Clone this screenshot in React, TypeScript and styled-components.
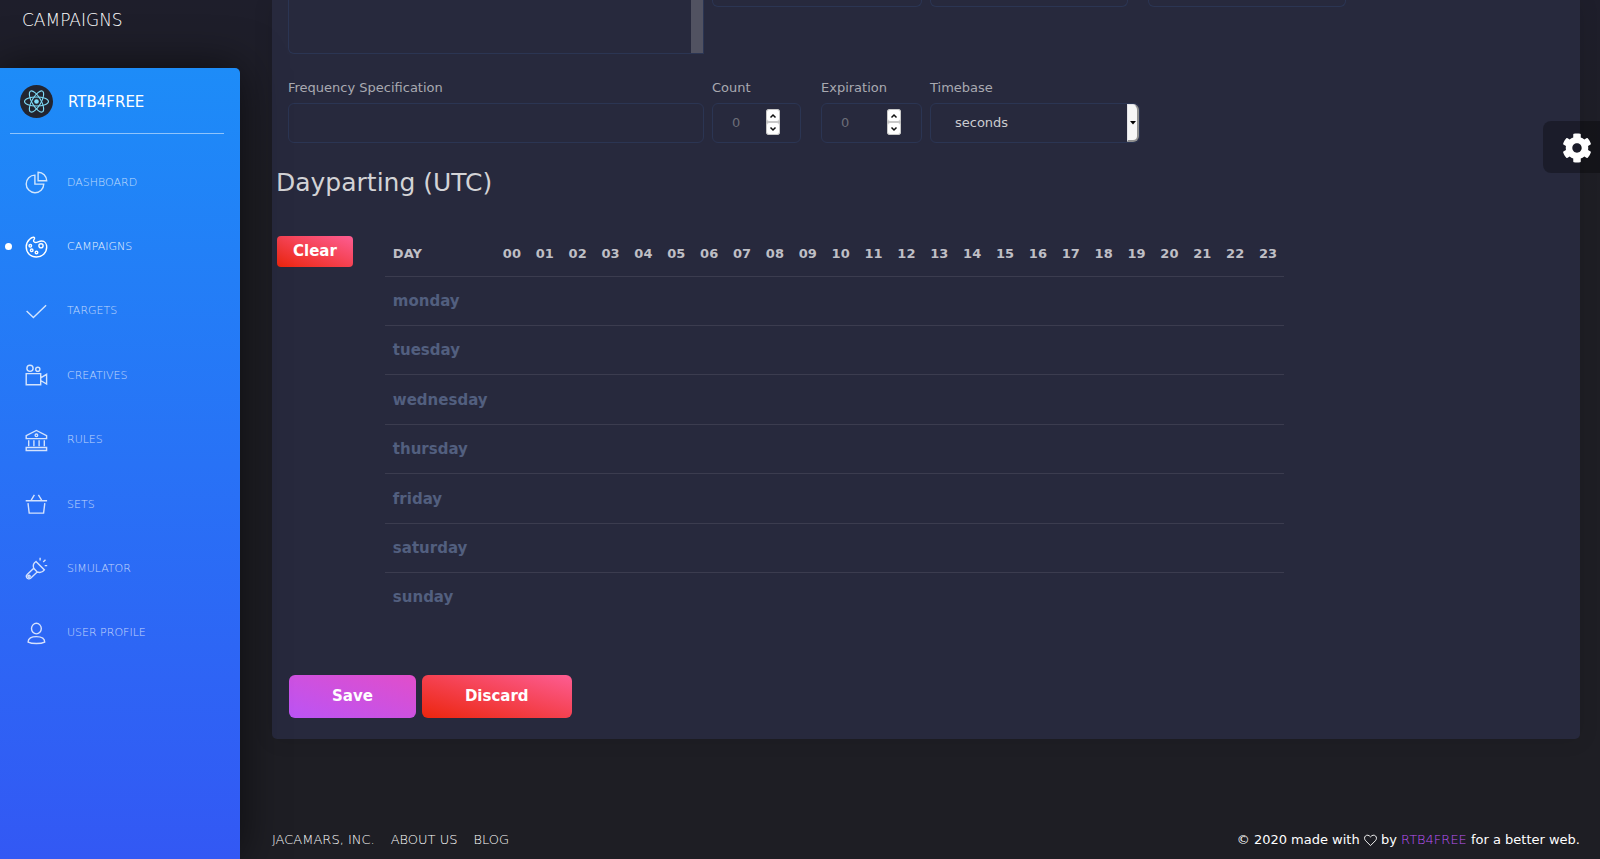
import React from "react";
import styled, { createGlobalStyle, css } from "styled-components";
import { FaCog } from "react-icons/fa";

const GlobalStyle = createGlobalStyle`
  *, *::before, *::after { box-sizing: border-box; }
  body {
    margin: 0;
    background: #1e1e24;
    color: #ccccd0;
    font-family: "DejaVu Sans", sans-serif;
    font-size: 13px;
  }
  button, input, select, textarea { font-family: inherit; font-size: inherit; }
`;

const Page = styled.div`
  display: flex;
  min-height: 100vh;
  background: linear-gradient(#1e1e2b, #1e1e24 200px);
`;

const SideColumn = styled.div`
  position: relative;
  z-index: 1;
  display: flex;
  flex: none;
  flex-direction: column;
  width: 240px;
`;

const PageTitle = styled.a`
  height: 68px;
  padding-left: 22px;
  color: #ffffff;
  font-size: 17px;
  font-weight: 200;
  line-height: 40px;
  text-decoration: none;
`;

const Sidebar = styled.aside`
  flex: 1;
  border-radius: 0 5px 0 0;
  background: linear-gradient(#1d8cf8, #3358f4);
  box-shadow: 0 0 45px rgba(0, 0, 0, 0.6);
`;

const Brand = styled.a`
  display: flex;
  align-items: center;
  gap: 15px;
  height: 66px;
  margin: 0 16px 0 10px;
  padding: 2px 0 0 10px;
  border-bottom: 1px solid rgba(255, 255, 255, 0.5);
  color: #ffffff;
  font-size: 15px;
  text-decoration: none;
`;

const Menu = styled.ul`
  display: grid;
  grid-template-rows: repeat(8, 1fr);
  height: 515px;
  margin: 16px 0 0;
  padding: 0;
  list-style: none;
`;

const MenuLink = styled.a<{ $active?: boolean }>`
  display: flex;
  align-items: center;
  height: 100%;
  gap: 20px;
  color: #ffffff;
  font-size: 11px;
  font-weight: 200;
  text-decoration: none;

  &::before {
    width: 7px;
    height: 7px;
    margin: 0 -7px 0 5px;
    border-radius: 50%;
    background: ${(p) => (p.$active ? "#ffffff" : "transparent")};
    content: "";
  }

  svg { opacity: ${(p) => (p.$active ? 1 : 0.8)}; }
  span { opacity: ${(p) => (p.$active ? 0.9 : 0.7)}; }
`;

const Content = styled.div`
  display: flex;
  flex: 1;
  flex-direction: column;
  min-width: 0;
  padding: 0 20px 0 32px;
`;

const Card = styled.main`
  padding-bottom: 21px;
  border-radius: 0 0 5px 5px;
  background: #27293d;
  box-shadow: 0 1px 20px rgba(0, 0, 0, 0.1);
`;

const FormRow = styled.div`
  display: grid;
  grid-template-columns: repeat(12, 1fr);
`;

const Field = styled.div<{ $span: number; $left?: number; $right?: number }>`
  display: flex;
  flex-direction: column;
  grid-column: span ${(p) => p.$span};
  min-width: 0;
  padding: 0 ${(p) => p.$right ?? 4}px 0 ${(p) => p.$left ?? 4}px;
`;

const Label = styled.label`
  margin: 26px 0 7px;
  color: #a9a9b1;
  line-height: 16px;
`;

const frame = css`
  width: 100%;
  border: 1px solid #2b3553;
  border-radius: 6px;
  background: transparent;
  color: #ccccd0;
`;

const TextInput = styled.input`
  ${frame}
  height: 40px;
  padding: 0 20px;
`;

const ClippedInput = styled.input`
  ${frame}
  height: 7px;
  border-top: 0;
  border-radius: 0 0 6px 6px;
`;

const ClippedList = styled.div`
  ${frame}
  display: flex;
  height: 54px;
  border-top: 0;
  border-radius: 0 0 0 6px;
`;

const ListText = styled.textarea`
  flex: 1;
  min-width: 0;
  border: 0;
  background: transparent;
  color: inherit;
  resize: none;
`;

const ScrollTrack = styled.div`
  width: 12px;
  background: #515261;
`;

const ControlBox = styled.div`
  ${frame}
  position: relative;
  display: flex;
  align-items: center;
  height: 40px;
  padding-bottom: 2px;
`;

const NumberInput = styled.input`
  flex: 1;
  min-width: 0;
  padding: 0 0 0 19px;
  border: 0;
  background: transparent;
  color: #ccccd0;
  appearance: textfield;

  &::placeholder { color: #6c6d78; opacity: 1; }
  &::-webkit-inner-spin-button { appearance: none; margin: 0; }
`;

const Spinner = styled.div`
  display: flex;
  flex-direction: column;
  width: 14px;
  margin-right: 20px;
  border-radius: 3px;
  background: #bdbdbd;
`;

const SpinButton = styled.button`
  display: flex;
  align-items: center;
  justify-content: center;
  height: 13px;
  padding: 0;
  border: 1px solid #c8c8c8;
  border-radius: 3px;
  background: #ffffff;
`;

const Select = styled.select`
  width: 100%;
  height: 100%;
  padding: 0 24px;
  border: 0;
  border-radius: 6px;
  background: transparent;
  color: #ccccd0;
  appearance: none;
`;

const SelectArrow = styled.span`
  position: absolute;
  top: 0;
  right: 0;
  bottom: 0;
  display: flex;
  align-items: center;
  justify-content: center;
  width: 12px;
  border: solid;
  border-width: 1px 2px 2px 1px;
  border-color: #e3e3e8 #909090 #909090 #e3e3e8;
  border-radius: 0 6px 6px 0;
  background: #f6f6f6;
  pointer-events: none;
`;

const Heading = styled.h2`
  margin: 25px 0 38px 4px;
  color: #d3d3d6;
  font-size: 25px;
  font-weight: 400;
  line-height: 30px;
`;

const Schedule = styled.section`
  display: flex;
  align-items: flex-start;
  gap: 32px;
  padding-left: 5px;
`;

const Button = styled.button<{ $tone?: "primary"; $small?: boolean }>`
  flex: none;
  height: ${(p) => (p.$small ? 31 : 43)}px;
  padding: ${(p) => (p.$small ? "0 16px 2px" : "0 43px 2px")};
  border: 0;
  border-radius: ${(p) => (p.$small ? 4 : 6)}px;
  background: ${(p) =>
    p.$tone === "primary"
      ? "linear-gradient(to bottom left, #e14eca, #ba54f5)"
      : "linear-gradient(to bottom left, #fd5d93, #ec250d)"};
  color: #ffffff;
  font-size: 15px;
  font-weight: 700;
`;

const Table = styled.table`
  width: 100%;
  max-width: 899px;
  height: 385px;
  border-collapse: collapse;
  table-layout: fixed;

  th { padding: 0 8px; text-align: left; }
  thead th { height: 40px; padding-bottom: 5px; color: #bfbfc5; }
  thead th:first-child { width: 110px; }
  thead th + th { padding: 0 0 5px 8px; }
  tbody tr { border-top: 1px solid #3b3c4f; }
  tbody th { color: #525f7f; font-size: 15px; }
`;

const Actions = styled.div`
  display: flex;
  gap: 6px;
  padding: 54px 17px 0;
`;

const Footer = styled.footer`
  display: flex;
  align-items: center;
  justify-content: space-between;
  margin-top: auto;
  padding-bottom: 10px;
  color: #ffffff;
  line-height: 18px;
`;

const FooterLinks = styled.nav`
  display: flex;
  gap: 16px;

  a { color: #ffffff; font-weight: 200; text-decoration: none; }
`;

const Copyright = styled.div`
  svg { vertical-align: -3px; }
  a { color: #ba54f5; font-weight: 200; text-decoration: none; }
`;

const SettingsButton = styled.button`
  position: fixed;
  top: 121px;
  right: 0;
  z-index: 2;
  display: flex;
  align-items: center;
  width: 57px;
  height: 52px;
  padding: 1px 0 0 19px;
  border: 0;
  border-radius: 8px 0 0 8px;
  background: rgba(0, 0, 0, 0.3);
  color: #ffffff;
`;

const MenuIcon = ({ children }: { children: React.ReactNode }) => (
  <svg width="22" height="22" viewBox="0 0 22 22" fill="none" stroke="#ffffff" strokeWidth="1.4" overflow="visible" aria-hidden="true">
    <g transform="translate(.4 .3)">{children}</g>
  </svg>
);

const menu = [
  {
    label: "DASHBOARD",
    icon: <><path d="M9.5 3.8A8.8 8.8 0 1 0 18.4 12.8H9.5Z" /><path d="M12.7 .9v8.6h8.6A8.6 8.6 0 0 0 12.7 .9Z" /></>,
  },
  {
    label: "CAMPAIGNS",
    icon: (
      <>
        <path d="M8.6 1C7 .6 5.6 1.600 4.200 3C1.900 5.200.8 7.500.8 10.500C.8 16.500 5.300 20.700 11 20.700S21.300 16.500 21.300 10.800C21.300 7.500 19.300 4.700 16.300 4.700C13.500 4.700 12.300 6.200 10.400 6.200C8.300 6.200 7.700 4.500 8.600 3.300C9.200 2.500 9.500 1.400 8.600 1Z" />
        <circle cx="15.600" cy="9.500" r="2.100" />
        <circle cx="4.900" cy="9.500" r="1.300" />
        <circle cx="6.300" cy="14" r="1.300" />
        <circle cx="11.100" cy="16.200" r="1.300" />
      </>
    ),
  },
  { label: "TARGETS", icon: <path d="M1.200 10.800l6.800 6.500L20.700 5" /> },
  {
    label: "CREATIVES",
    icon: (
      <>
        <circle cx="4.600" cy="4" r="3.100" />
        <circle cx="12.400" cy="5" r="2.100" />
        <path d="M.8 9.300h14.500v11.200H.8ZM15.300 13.600l5.900-3.600v9.700l-5.900-3.500" />
      </>
    ),
  },
  {
    label: "RULES",
    icon: (
      <>
        <path d="M.8 9.300V6.400L11 1.200l10.200 5.200v2.900ZM.8 18.200h20.400v3H.8Z" />
        <circle cx="11" cy="6" r="1.300" />
        <path d="M3.300 11v6M8.500 11v6M13.700 11v6M18.900 11v6" />
      </>
    ),
  },
  { label: "SETS", icon: <path d="M.3 7.400h21.400M2.600 9.800l1.200 10h14.400l1.200-10M5.800 6.800L9 1.500M16.200 6.800L13 1.500" /> },
  {
    label: "SIMULATOR",
    icon: (
      <>
        <path d="M10.600 4.200l8.400 8.400C17.300 15 14.600 15.600 11.800 14.700L5.200 21C4 22 2.300 21.600 1.500 20.500S1 18 1.800 17.300L8.300 11C7.300 8.200 8.200 5.800 10.600 4.200ZM8.300 11l3.500 3.700" />
        <circle cx="3.700" cy="18.900" r="1.100" />
        <path d="M14.700 3.200V.5M17.800 4.700L20.100 2.400M19.300 8.300h2.500" />
      </>
    ),
  },
  {
    label: "USER PROFILE",
    icon: <><ellipse cx="11" cy="6.300" rx="4.900" ry="5.300" /><path d="M2.700 19.800C2.700 15.800 6 14.300 11 14.300S19.300 15.800 19.300 19.800C15.500 21.700 6.500 21.700 2.700 19.800Z" /></>,
  },
];

const Logo = () => (
  <svg width="33" height="33" viewBox="0 0 33 33" aria-hidden="true">
    <circle cx="16.500" cy="16.500" r="16.500" fill="#222531" />
    <g fill="none" stroke="#7fdcf8" strokeWidth="1.100">
      <ellipse cx="16.500" cy="16.500" rx="12" ry="4.500" />
      <ellipse cx="16.500" cy="16.500" rx="12" ry="4.500" transform="rotate(60 16.500 16.500)" />
      <ellipse cx="16.500" cy="16.500" rx="12" ry="4.500" transform="rotate(120 16.500 16.500)" />
    </g>
    <circle cx="16.500" cy="16.500" r="2.300" fill="#7fdcf8" />
  </svg>
);

const Chevron = ({ up }: { up?: boolean }) => (
  <svg width="8" height="6" viewBox="0 0 8 6" fill="none" stroke="#111111" strokeWidth="1.500" aria-hidden="true">
    <path d={up ? "M1.500 4.500L4 2l2.500 2.500" : "M1.500 1.500L4 4l2.500-2.500"} />
  </svg>
);

const NumberBox = ({ id }: { id: string }) => (
  <ControlBox>
    <NumberInput id={id} type="number" placeholder="0" />
    <Spinner>
      <SpinButton type="button" aria-label="Increase"><Chevron up /></SpinButton>
      <SpinButton type="button" aria-label="Decrease"><Chevron /></SpinButton>
    </Spinner>
  </ControlBox>
);

const days = ["monday", "tuesday", "wednesday", "thursday", "friday", "saturday", "sunday"];
const hours = Array.from({ length: 24 }, (_, h) => String(h).padStart(2, "0"));

export default function App() {
  return (
    <Page>
      <GlobalStyle />
      <SideColumn>
        <PageTitle href="#campaigns">CAMPAIGNS</PageTitle>
        <Sidebar>
          <Brand href="#home"><Logo />RTB4FREE</Brand>
          <Menu>
            {menu.map(({ label, icon }) => (
              <li key={label}>
                <MenuLink href="#menu" $active={label === "CAMPAIGNS"}>
                  <MenuIcon>{icon}</MenuIcon>
                  <span>{label}</span>
                </MenuLink>
              </li>
            ))}
          </Menu>
        </Sidebar>
      </SideColumn>
      <Content>
        <Card>
          <FormRow>
            <Field $span={4} $left={16}>
              <ClippedList>
                <ListText aria-label="Rules" />
                <ScrollTrack />
              </ClippedList>
            </Field>
            <Field $span={2}><ClippedInput aria-label="Region" /></Field>
            <Field $span={2} $right={16}><ClippedInput aria-label="Start" /></Field>
            <Field $span={2} $right={16}><ClippedInput aria-label="End" /></Field>
          </FormRow>
          <FormRow>
            <Field $span={4} $left={16}>
              <Label htmlFor="frequency">Frequency Specification</Label>
              <TextInput id="frequency" />
            </Field>
            <Field $span={1} $right={16}>
              <Label htmlFor="count">Count</Label>
              <NumberBox id="count" />
            </Field>
            <Field $span={1}>
              <Label htmlFor="expiration">Expiration</Label>
              <NumberBox id="expiration" />
            </Field>
            <Field $span={2}>
              <Label htmlFor="timebase">Timebase</Label>
              <ControlBox>
                <Select id="timebase" defaultValue="seconds">
                  <option>seconds</option>
                  <option>minutes</option>
                  <option>hours</option>
                </Select>
                <SelectArrow>
                  <svg width="6" height="4" viewBox="0 0 6 4" aria-hidden="true"><path d="M0 0h6L3 3.500Z" /></svg>
                </SelectArrow>
              </ControlBox>
            </Field>
          </FormRow>
          <Heading>Dayparting (UTC)</Heading>
          <Schedule>
            <Button type="button" $small>Clear</Button>
            <Table>
              <thead>
                <tr>
                  <th scope="col">DAY</th>
                  {hours.map((h) => <th key={h} scope="col">{h}</th>)}
                </tr>
              </thead>
              <tbody>
                {days.map((d) => (
                  <tr key={d}>
                    <th scope="row">{d}</th>
                    {hours.map((h) => <td key={h} />)}
                  </tr>
                ))}
              </tbody>
            </Table>
          </Schedule>
          <Actions>
            <Button type="button" $tone="primary">Save</Button>
            <Button type="button">Discard</Button>
          </Actions>
        </Card>
        <Footer>
          <FooterLinks>
            <a href="#company">JACAMARS, INC.</a>
            <a href="#about">ABOUT US</a>
            <a href="#blog">BLOG</a>
          </FooterLinks>
          <Copyright>
            © 2020 made with{" "}
            <svg width="13" height="13" viewBox="0 0 14 13" fill="none" stroke="#ffffff" aria-hidden="true">
              <path d="M7 12L1.800 6.800C.2 5.200.2 2.900 1.600 1.600S5.300.5 7 2.600C8.700.5 11 .3 12.400 1.600S13.800 5.200 12.200 6.800Z" />
            </svg>{" "}
            by <a href="#rtb4free">RTB4FREE</a> for a better web.
          </Copyright>
        </Footer>
      </Content>
      <SettingsButton type="button" aria-label="Settings"><FaCog size={30} /></SettingsButton>
    </Page>
  );
}
